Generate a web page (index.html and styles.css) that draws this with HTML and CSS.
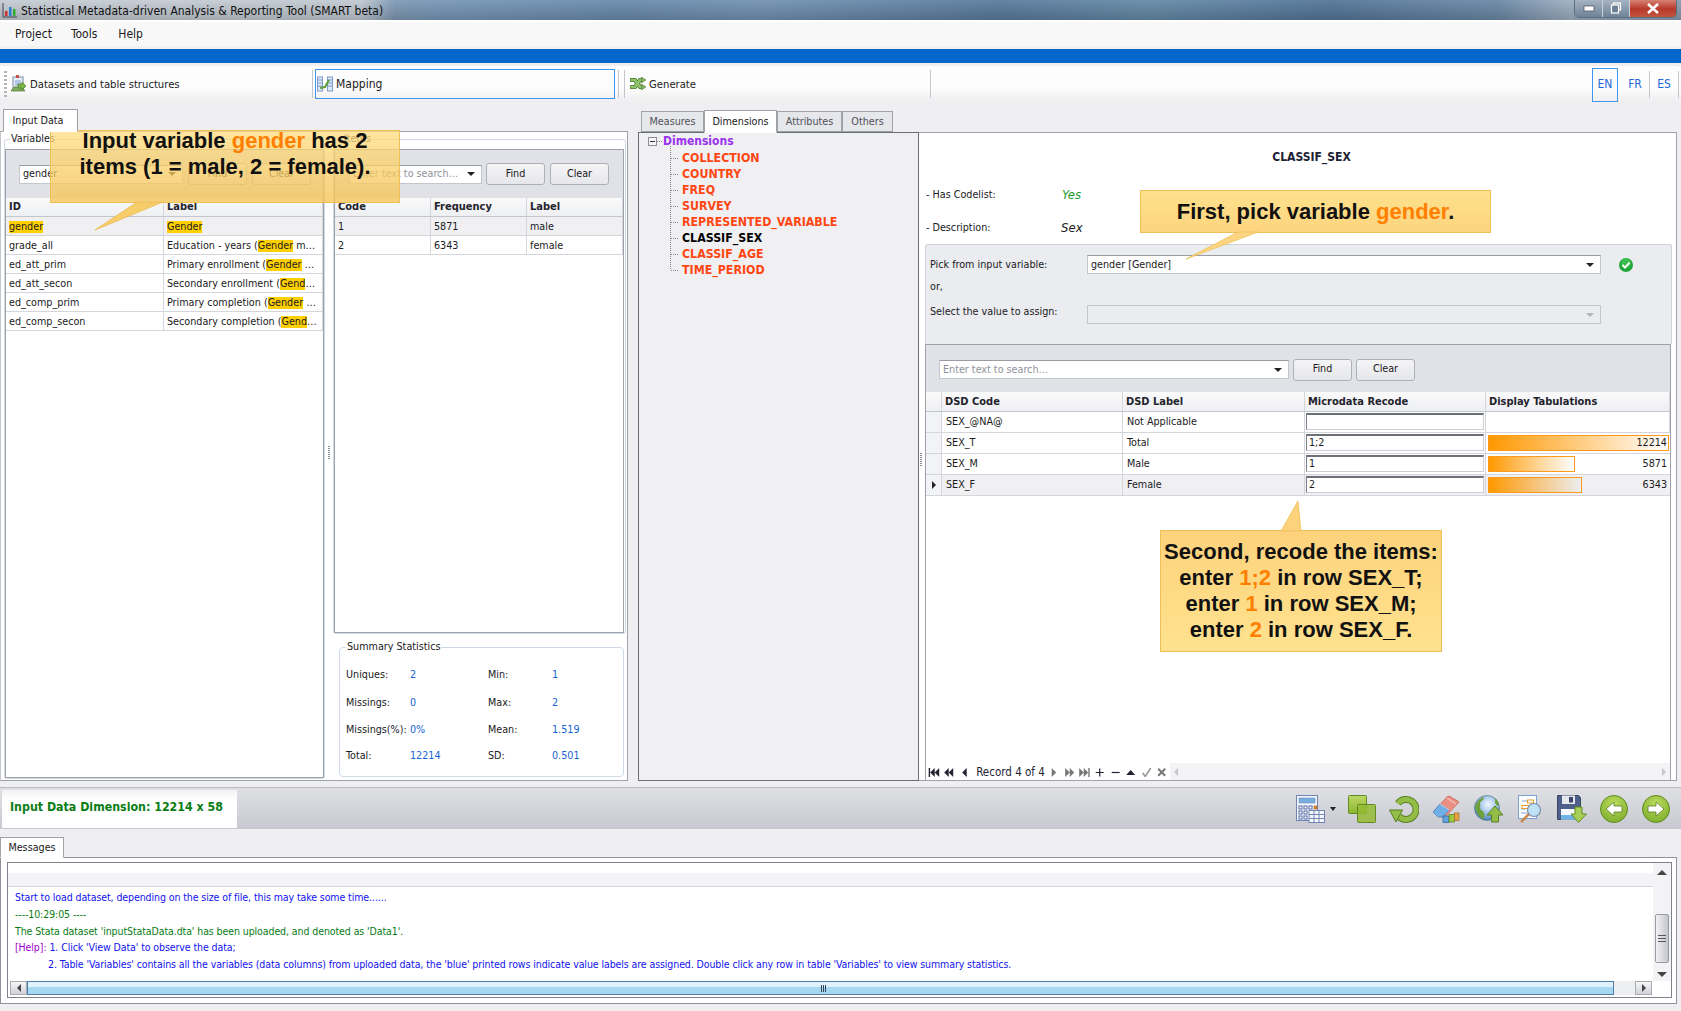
FILE: index.html
```html
<!DOCTYPE html>
<html lang="en">
<head>
<meta charset="utf-8">
<title>SMART beta</title>
<link rel="stylesheet" href="styles.css">
</head>
<body>
<div class="app">
  <header class="titlebar">
    <svg class="app-icon" width="16" height="16" viewBox="0 0 16 16"><path d="M1 1v14h14" fill="none" stroke="#445" stroke-width="1"/><rect x="3" y="9" width="2.5" height="5" fill="#c33"/><rect x="7" y="5" width="2.5" height="9" fill="#2a7fd0"/><rect x="11" y="7" width="2.5" height="7" fill="#3a3"/></svg>
    <span class="title-text">Statistical Metadata-driven Analysis &amp; Reporting Tool (SMART beta)</span>
    <div class="winbtns">
      <span class="winbtn win-min"><svg width="12" height="8" viewBox="0 0 12 8"><rect x="1" y="2" width="10" height="5" fill="#fff" stroke="#556" stroke-width=".8"/></svg></span>
      <span class="winbtn win-max"><svg width="12" height="12" viewBox="0 0 12 12"><rect x="3.5" y="1" width="7" height="7" fill="none" stroke="#fff" stroke-width="1.2"/><rect x="1.5" y="3" width="7" height="8" fill="#6b7f95" stroke="#fff" stroke-width="1.2"/></svg></span>
      <span class="winbtn win-close"><svg width="12" height="11" viewBox="0 0 12 11"><path d="M1 1l10 9M11 1L1 10" stroke="#fff" stroke-width="2.6"/></svg></span>
    </div>
  </header>
  <nav class="menubar"><span>Project</span><span>Tools</span><span>Help</span></nav>
  <div class="band"></div>
  <div class="toolbar">
    <span class="grip"></span>
    <div class="tool tool-data">
      <svg width="17" height="18" viewBox="0 0 17 18"><rect x="3" y="2" width="10" height="13" fill="#e8eef8" stroke="#7a8aa8"/><rect x="6" y="0" width="3" height="3" fill="#c9504a"/><path d="M5 6h6M5 8h6M5 10h6" stroke="#7fa0d0"/><path d="M1 16l3-4h8l3 4z" fill="#7fae5a" stroke="#4f7a35" stroke-width=".7"/><path d="M8 9h4V7l4 4-4 4v-2H8z" fill="#7cb342" stroke="#4f7a35" stroke-width=".7"/></svg>
      <span>Datasets and table structures</span>
    </div>
    <span class="sep"></span>
    <div class="tool tool-map">
      <svg width="16" height="16" viewBox="0 0 16 16"><rect x="0.5" y="1" width="5" height="14" fill="#dfe8f6" stroke="#7f9bc8"/><rect x="10.5" y="1" width="5" height="14" fill="#dfe8f6" stroke="#7f9bc8"/><path d="M1 4h4M1 7h4M1 10h4M11 4h4M11 7h4M11 10h4" stroke="#7f9bc8"/><path d="M3 12l5-1 4-7" fill="none" stroke="#5c9e3a" stroke-width="2"/></svg>
      <span>Mapping</span>
    </div>
    <span class="sep sep-a"></span><span class="sep sep-b"></span>
    <div class="tool tool-gen">
      <svg width="16" height="13" viewBox="0 0 16 13"><path d="M0 3h5l5 7h2" fill="none" stroke="#4f7a35" stroke-width="4"/><path d="M0 10h5l5-7h2" fill="none" stroke="#4f7a35" stroke-width="4"/><path d="M.5 3H5l5 7h2" fill="none" stroke="#8fc46a" stroke-width="2.6"/><path d="M.5 10H5l5-7h2" fill="none" stroke="#8fc46a" stroke-width="2.6"/><path d="M11.500 0l4.500 3-4.500 3zM11.500 7l4.500 3-4.500 3z" fill="#7cb35a" stroke="#4f7a35" stroke-width=".5"/></svg>
      <span>Generate</span>
    </div>
    <span class="sep"></span>
    <div class="langs"><span class="lang lang-on">EN</span><span class="lang">FR</span><span class="lang">ES</span></div>
  </div>

  <main class="main">
    <section class="left">
      <div class="tabs"><span class="tab tab-on tab-input">Input Data</span></div>
      <div class="left-panel">
        <div class="group group-vars">
          <span class="legend">Variables</span>
          <div class="grid-box grow">
            <div class="search search-vars">
              <span class="combo combo-vars"><span class="combo-text">gender</span><i class="caret"></i></span>
              <span class="btn">Find</span><span class="btn">Clear</span>
            </div>
            <div class="row head cols-vars"><span>ID</span><span>Label</span></div>
            <div class="row sel cols-vars"><span><mark>gender</mark></span><span><mark>Gender</mark></span></div>
            <div class="row cols-vars"><span>grade_all</span><span>Education - years (<mark>Gender</mark> m…</span></div>
            <div class="row cols-vars"><span>ed_att_prim</span><span>Primary enrollment (<mark>Gender</mark> …</span></div>
            <div class="row cols-vars"><span>ed_att_secon</span><span>Secondary enrollment (<mark>Gend</mark>…</span></div>
            <div class="row cols-vars"><span>ed_comp_prim</span><span>Primary completion (<mark>Gender</mark> …</span></div>
            <div class="row cols-vars"><span>ed_comp_secon</span><span>Secondary completion (<mark>Gend</mark>…</span></div>
          </div>
        </div>
        <div class="splitter"><i class="grip-v"></i></div>
        <div class="items-col">
          <div class="group group-items">
            <span class="legend legend-items">Items</span>
            <div class="grid-box grow">
              <div class="search search-items">
                <span class="combo combo-items"><span class="combo-text ph">Enter text to search…</span><i class="caret"></i></span>
                <span class="btn">Find</span><span class="btn">Clear</span>
              </div>
              <div class="row head cols-items"><span>Code</span><span>Frequency</span><span>Label</span></div>
              <div class="row sel cols-items"><span>1</span><span>5871</span><span>male</span></div>
              <div class="row cols-items"><span>2</span><span>6343</span><span>female</span></div>
            </div>
          </div>
          <div class="summary">
            <span class="legend legend-sum">Summary Statistics</span>
            <span>Uniques:</span><b>2</b><span>Min:</span><b>1</b>
            <span>Missings:</span><b>0</b><span>Max:</span><b>2</b>
            <span>Missings(%):</span><b>0%</b><span>Mean:</span><b>1.519</b>
            <span>Total:</span><b>12214</b><span>SD:</span><b>0.501</b>
          </div>
        </div>
      </div>
    </section>

    <section class="right">
      <div class="tabs tabs-right">
        <span class="tab t-m">Measures</span><span class="tab tab-on t-d">Dimensions</span><span class="tab t-a">Attributes</span><span class="tab t-o">Others</span>
      </div>
      <div class="right-body">
        <div class="tree">
          <div class="tree-root"><svg class="expander" width="9" height="9" viewBox="0 0 9 9"><rect x=".5" y=".5" width="8" height="8" fill="#f6f6f8" stroke="#8a8f9a"/><path d="M2 4.5h5" stroke="#333"/></svg><i class="dot-h"></i><span>Dimensions</span></div>
          <ul class="tree-list">
            <li>COLLECTION</li><li>COUNTRY</li><li>FREQ</li><li>SURVEY</li><li>REPRESENTED_VARIABLE</li><li class="tree-on">CLASSIF_SEX</li><li>CLASSIF_AGE</li><li>TIME_PERIOD</li>
          </ul>
        </div>
        <div class="detail">
          <i class="grip-v grip-detail"></i>
          <h2 class="detail-title">CLASSIF_SEX</h2>
          <div class="info"><span class="info-k">- Has Codelist:</span><em class="yes">Yes</em></div>
          <div class="info"><span class="info-k">- Description:</span><em class="sex">Sex</em></div>
          <div class="pick">
            <span class="pick-label">Pick from input variable:</span>
            <span class="combo combo-pick"><span class="combo-text">gender [Gender]</span><i class="caret"></i></span>
            <svg class="ok" width="14" height="14" viewBox="0 0 14 14"><circle cx="7" cy="7" r="7" fill="#22a83a"/><circle cx="7" cy="5" r="5" fill="#4cc95e" opacity=".6"/><path d="M3.5 7l2.5 2.6 4.5-5" fill="none" stroke="#fff" stroke-width="2"/></svg>
            <span class="or">or,</span>
            <span class="pick-sel">Select the value to assign:</span>
            <span class="combo combo-off"><i class="caret caret-off"></i></span>
          </div>
          <div class="recode">
            <div class="search search-recode">
              <span class="combo combo-recode"><span class="combo-text ph">Enter text to search…</span><i class="caret"></i></span>
              <span class="btn">Find</span><span class="btn">Clear</span>
            </div>
            <div class="row head cols-recode"><span class="rowsel"></span><span>DSD Code</span><span>DSD Label</span><span>Microdata Recode</span><span>Display Tabulations</span></div>
            <div class="row rrow cols-recode"><span class="rowsel"></span><span>SEX_@NA@</span><span>Not Applicable</span><span class="cell-in"><span class="input"></span></span><span></span></div>
            <div class="row rrow cols-recode"><span class="rowsel"></span><span>SEX_T</span><span>Total</span><span class="cell-in"><span class="input">1;2</span></span><span class="cell-bar"><i class="bar" style="width:181px"></i><span>12214</span></span></div>
            <div class="row rrow cols-recode"><span class="rowsel"></span><span>SEX_M</span><span>Male</span><span class="cell-in"><span class="input">1</span></span><span class="cell-bar"><i class="bar" style="width:87px"></i><span>5871</span></span></div>
            <div class="row rrow sel cols-recode"><span class="rowsel"><i class="row-mark"></i></span><span>SEX_F</span><span>Female</span><span class="cell-in"><span class="input">2</span></span><span class="cell-bar"><i class="bar bar-f" style="width:94px"></i><span>6343</span></span></div>
            <div class="recode-fill"></div>
            <div class="navbar">
              <svg class="nav-i" width="12" height="9" viewBox="0 0 12 9"><path d="M1 0h1.4v9H1zM7 0v9L2.5 4.5zM11.5 0v9L7 4.5z" fill="#223"/></svg>
              <svg class="nav-i" width="12" height="9" viewBox="0 0 12 9"><path d="M6 0v9L1.5 4.5zM10.5 0v9L6 4.5z" fill="#223"/></svg>
              <svg class="nav-i" width="12" height="9" viewBox="0 0 12 9"><path d="M8 0v9L3.5 4.5z" fill="#223"/></svg>
              <span class="record">Record 4 of 4</span>
              <svg class="nav-i" width="12" height="9" viewBox="0 0 12 9"><path d="M4 0v9l4.5-4.5z" fill="#777"/></svg>
              <svg class="nav-i" width="12" height="9" viewBox="0 0 12 9"><path d="M1.5 0v9L6 4.5zM6 0v9l4.5-4.5z" fill="#777"/></svg>
              <svg class="nav-i" width="12" height="9" viewBox="0 0 12 9"><path d="M.5 0v9L5 4.5zM5 0v9l4.5-4.5zM9.6 0H11v9H9.600z" fill="#777"/></svg>
              <svg class="nav-i" width="12" height="9" viewBox="0 0 12 9"><path d="M6 .5v8M2 4.500h8" stroke="#223" stroke-width="1.2"/></svg>
              <svg class="nav-i" width="12" height="9" viewBox="0 0 12 9"><path d="M2 4.500h8" stroke="#223" stroke-width="1.200"/></svg>
              <svg class="nav-i" width="12" height="9" viewBox="0 0 12 9"><path d="M6 2l4.500 5h-9z" fill="#223"/></svg>
              <svg class="nav-i" width="12" height="9" viewBox="0 0 12 9"><path d="M2 5l2.500 3.500L10 0" fill="none" stroke="#999" stroke-width="1.600"/></svg>
              <svg class="nav-i" width="12" height="9" viewBox="0 0 12 9"><path d="M2.500.8l7 7M9.500.8l-7 7" stroke="#777" stroke-width="2"/></svg>
              <div class="nav-track"><i class="arr-l"></i><i class="arr-r"></i></div>
            </div>
          </div>
        </div>
      </div>
    </section>
  </main>

  <div class="status">
    <div class="dim">Input Data Dimension: 12214 x 58</div>
    <div class="actions">
      <span class="act act-calc">
        <svg width="29" height="28" viewBox="0 0 29 28"><rect x=".5" y=".5" width="21" height="25" fill="#f2f5fb" stroke="#7084b8"/><rect x="3" y="3" width="16" height="5" fill="#78aedd" stroke="#5f86b8" stroke-width=".5"/><g fill="#fff" stroke="#566aa5"><rect x="3" y="11" width="3" height="3"/><rect x="8" y="11" width="3" height="3"/><rect x="13" y="11" width="3" height="3"/><rect x="3" y="16" width="3" height="3"/><rect x="8" y="16" width="3" height="3"/><rect x="3" y="21" width="3" height="3"/><rect x="8" y="21" width="3" height="3"/></g><rect x="18" y="11" width="3" height="3" fill="#e08a32" stroke="#a86020" stroke-width=".6"/><rect x="13" y="15.500" width="15.500" height="12" fill="#f6f8fc" stroke="#7084b8"/><path d="M13 19.500h15.500M13 23.500h15.500M18 15.500v12M23 15.500v12" stroke="#7084b8"/></svg>
        <i class="act-caret"></i>
      </span>
      <span class="act">
        <svg width="28" height="28" viewBox="0 0 28 28"><defs><linearGradient id="sq" x1="0" y1="0" x2="0" y2="1"><stop offset="0" stop-color="#bcd766"/><stop offset="1" stop-color="#8db52c"/></linearGradient></defs><rect x=".5" y=".5" width="18" height="18" rx="1" fill="url(#sq)" stroke="#618a22"/><rect x="9.500" y="9.500" width="18" height="18" rx="1" fill="#95bb34" fill-opacity=".85" stroke="#618a22"/></svg>
      </span>
      <span class="act">
        <svg width="30" height="28" viewBox="0 0 30 28"><path d="M10 21.500A10 10 0 1 0 9 8.500" fill="none" stroke="#557f22" stroke-width="7"/><path d="M10 21.500A10 10 0 1 0 9 8.500" fill="none" stroke="#93bd47" stroke-width="5"/><path d="M.5 15h13l-6.500 12z" fill="#93bd47" stroke="#557f22"/></svg>
      </span>
      <span class="act">
        <svg width="28" height="28" viewBox="0 0 28 28"><path d="M1 17L15 2a3 3 0 0 1 4 0l8 5-14 15H7z" fill="#e98f84" stroke="#c8574d" stroke-width=".7"/><path d="M1 17l7-8 9 6-6 7H6z" fill="#6faee6" stroke="#4d86c0" stroke-width=".7"/><path d="M8 9l9 6M15 3l9 6" stroke="#fff" stroke-opacity=".6"/><rect x="11" y="21" width="6" height="6.500" fill="#5fa6e0" stroke="#2c5e90" stroke-width=".7"/><rect x="17" y="19.500" width="5.500" height="7.500" fill="#9cc73e" stroke="#557f22" stroke-width=".7"/><rect x="22.500" y="18" width="4.500" height="7.500" fill="#e8a040" stroke="#a06a20" stroke-width=".7"/></svg>
      </span>
      <span class="act">
        <svg width="29" height="28" viewBox="0 0 29 28"><defs><radialGradient id="gl" cx=".55" cy=".35" r=".65"><stop offset="0" stop-color="#f2f8ff"/><stop offset=".5" stop-color="#a7c8ea"/><stop offset="1" stop-color="#4a7fb8"/></radialGradient></defs><circle cx="13" cy="13" r="12.500" fill="url(#gl)" stroke="#4a7a8e" stroke-width=".7"/><path d="M1 11c3-6 6-8 9-9 0 3-3 4-4 6 1 3-1 4 1 7 3 1 4 4 3 9-4-1-8-5-9-13zM21 3c3 2 4 5 4 8-2 0-3-1-4-3z" fill="#6fa03c"/><path d="M21 11l8 9h-4.500v7h-7v-7H13z" fill="#93bd47" stroke="#557f22"/></svg>
      </span>
      <span class="act">
        <svg width="24" height="28" viewBox="0 0 24 28"><rect x=".5" y=".5" width="18" height="23" fill="#fbfcff" stroke="#7fa0d0"/><path d="M4 6h5M3 14h4M3 18h6" stroke="#8aa6cc"/><rect x="9.500" y="5" width="6" height="3" fill="none" stroke="#e8a020"/><rect x="4" y="10.500" width="6.500" height="3" fill="none" stroke="#e8a020"/><path d="M11 19L3 27" stroke="#c88a50" stroke-width="2.500"/><circle cx="16" cy="15" r="6.500" fill="#bfe0f5" stroke="#7a8ea8" stroke-width="1.200"/></svg>
      </span>
      <span class="act">
        <svg width="30" height="28" viewBox="0 0 30 28"><path d="M.5.5h21l2 2v22H.5z" fill="#4e5f8a" stroke="#3a4668"/><rect x="5" y=".5" width="13" height="8.500" fill="#e6e8ee"/><rect x="12" y="2" width="4" height="5.500" fill="#3a4668"/><rect x="4" y="14" width="16" height="10.500" fill="#f6f7fb"/><rect x="4" y="20" width="16" height="4.500" fill="#6fb4e8"/><path d="M18 12h7v7h4.500L21.500 27.500 14 19h4z" fill="#a8cf55" stroke="#618a22"/></svg>
      </span>
      <span class="act">
        <svg width="28" height="28" viewBox="0 0 28 28"><defs><radialGradient id="rb" cx=".5" cy=".3" r=".8"><stop offset="0" stop-color="#bcdc5c"/><stop offset="1" stop-color="#78a82a"/></radialGradient></defs><circle cx="14" cy="14" r="13.500" fill="url(#rb)" stroke="#5f8a22"/><path d="M6 14l8-7v4h8v6h-8v4z" fill="#fff" stroke="#557f22" stroke-width=".8"/></svg>
      </span>
      <span class="act">
        <svg width="28" height="28" viewBox="0 0 28 28"><defs><radialGradient id="rn" cx=".5" cy=".3" r=".8"><stop offset="0" stop-color="#bcdc5c"/><stop offset="1" stop-color="#78a82a"/></radialGradient></defs><circle cx="14" cy="14" r="13.500" fill="url(#rn)" stroke="#5f8a22"/><path d="M22 14l-8-7v4H6v6h8v4z" fill="#fff" stroke="#557f22" stroke-width=".8"/></svg>
      </span>
    </div>
  </div>

  <section class="messages">
    <div class="tabs tabs-msg"><span class="tab tab-on tab-msg">Messages</span></div>
    <div class="msg-panel">
      <div class="msg-inner">
        <div class="msg-top">
          <div class="msg-main">
            <div class="msg-strip"></div>
            <div class="msg-text">
              <p class="m-blue">Start to load dataset, depending on the size of file, this may take some time......</p>
              <p class="m-green">----10:29:05 ----</p>
              <p class="m-green">The Stata dataset 'inputStataData.dta' has been uploaded, and denoted as 'Data1'.</p>
              <p class="m-blue"><span class="m-help">[Help]:</span> 1. Click 'View Data' to observe the data;</p>
              <p class="m-blue m-ind">2. Table 'Variables' contains all the variables (data columns) from uploaded data, the 'blue' printed rows indicate value labels are assigned. Double click any row in table 'Variables' to view summary statistics.</p>
            </div>
          </div>
          <div class="vscroll"><i class="v-up"></i><i class="v-thumb"></i><i class="v-down"></i></div>
        </div>
        <div class="hscroll"><i class="h-btn h-l"></i><i class="h-thumb"></i><i class="h-btn h-r"></i></div>
      </div>
    </div>
  </section>

  <div class="callout c-one">
    <p>Input variable <em>gender</em> has 2</p>
    <p>items (1 = male, 2 = female).</p>
    <svg class="tail t-one" width="120" height="29" viewBox="0 0 120 29"><polygon points="87,0 113,0 45,28" fill="#f7cd6b" stroke="#e9bd50" stroke-width=".8"/></svg>
  </div>
  <div class="callout c-two">
    <p>First, pick variable <em>gender</em>.</p>
    <svg class="tail t-two" width="120" height="28" viewBox="0 0 120 28"><polygon points="98,0 118,0 46,27" fill="#fbd582" stroke="#eec055" stroke-width=".8"/></svg>
  </div>
  <div class="callout c-three">
    <p>Second, recode the items:</p>
    <p>enter <em>1;2</em> in row SEX_T;</p>
    <p>enter <em>1</em> in row SEX_M;</p>
    <p>enter <em>2</em> in row SEX_F.</p>
    <svg class="tail t-three" width="145" height="31" viewBox="0 0 145 31"><polygon points="121,31 141,31 138,1" fill="#fdd27c" stroke="#eec055" stroke-width=".8"/></svg>
  </div>
</div>
</body>
</html>
```

FILE: styles.css
```css
* { box-sizing: border-box; }
html, body { margin: 0; padding: 0; }
body { background: #efeff1; font: 10.7px/1.2 "DejaVu Sans Condensed", "Liberation Sans", sans-serif; color: #1a1a22; overflow: hidden; }
.app { position: relative; width: 1681px; height: 1011px; display: flex; flex-direction: column; }
p { margin: 0; }

.titlebar { height: 22px; display: flex; align-items: center; padding-left: 2px; border-bottom: 2px solid; border-image: linear-gradient(#30404f 50%, #fff 50%) 1;
  background: linear-gradient(180deg, rgba(255,255,255,.06), rgba(0,0,0,.16)), linear-gradient(90deg, #c6cdd4 0, #c2cad2 360px, #7f9ab6 395px, #7898b8 440px, #6a8cae 620px, #7393b3 760px, #5a7c9e 1000px, #668ba8 1150px, #54769a 1330px, #6d8aa8 1500px, #9fb0c2 1570px, #8a9db0 1681px); }
.app-icon { flex: none; }
.title-text { margin-left: 3px; padding-top: 2px; font-size: 12px; color: #111; }
.winbtns { margin-left: auto; margin-right: 4px; display: flex; height: 19px; margin-top: -1px; border: 1px solid #5c6f82; border-top: 0; border-radius: 0 0 5px 5px; overflow: hidden; align-self: flex-start; }
.winbtn { display: flex; align-items: center; justify-content: center; height: 100%; }
.win-min { width: 28px; background: linear-gradient(#a9b6c4, #6f8398); border-right: 1px solid #c8d0d8; }
.win-max { width: 27px; background: linear-gradient(#a9b6c4, #6f8398); border-right: 1px solid #c8d0d8; }
.win-close { width: 46px; background: linear-gradient(#d98a7c, #b8382a 55%, #c2553f); }

.menubar { height: 24px; background: #f8f8f8; display: flex; align-items: center; padding-left: 15px; gap: 19px; font-size: 12px; }
.menubar span:nth-child(3) { margin-left: 2px; }
.band { height: 17px; border-top: 3px solid #f1f1f1; background: #0366cb; border-bottom: 0; }

.toolbar { margin-top: 3px; height: 35px; display: flex; align-items: center; background: linear-gradient(#fdfdfd 60%, #efeff1); flex: none; }
.grip { width: 3px; height: 26px; margin-left: 4px; background: repeating-linear-gradient(#b4b6bc 0 2px, transparent 2px 4px); }
.tool { display: flex; align-items: center; gap: 3px; font-size: 11.2px; }
.tool > span { padding-top: 1px; }
.tool-data > span, .tool-gen > span { padding-top: 3px; }
.tool-data { width: 305px; padding-left: 3px; }
.sep { width: 1px; height: 28px; background: #c4c6cc; flex: none; }
.tool-map { width: 300px; height: 30px; margin-left: 2px; border: 1px solid #3f97ef; padding-left: 1px; font-size: 12px; }
.sep-a { margin-left: 3px; }
.sep-b { margin-left: 5px; }
.tool-gen { width: 305px; padding-left: 5px; }
.langs { margin-left: auto; display: flex; height: 34px; margin-right: 2px; }
.lang { width: 29px; display: flex; align-items: center; justify-content: center; color: #2468d8; font-size: 12px; border-right: 1px solid #c4c6cc; margin: 4px 0 0; height: 27px; }
.lang-on { width: 26px; height: 34px; margin: 1px 3px 0 0; border: 1px solid #3f97ef; }

.main { flex: none; height: 680px; margin-bottom: 6px; display: flex; padding-top: 8px; }
.left { width: 628px; flex: none; display: flex; flex-direction: column; }
.right { width: 1039px; margin-left: 10px; flex: none; display: flex; flex-direction: column; }

.tabs { display: flex; align-items: flex-end; flex: none; height: 22px; position: relative; z-index: 1; }
.tab { display: flex; align-items: center; justify-content: center; height: 21px; padding-top: 2px; background: #e6e7eb; border: 1px solid #a0a2aa; color: #50525a; margin-bottom: 0; }
.tab-on { background: #fff; color: #1a1a22; height: 23px; border-bottom-color: #fff; margin-bottom: -1px; }
.tab-input { width: 75px; margin-left: 3px; padding: 2px 5px 0 0; }

.left-panel { flex: 1; min-height: 0; display: flex; border: 1px solid #a0a2aa; border-left: 1px solid #c4c6cc; background: #fff; padding: 7px 1px 1px 3px; }
.group { position: relative; border: 1px solid #d0dae6; border-radius: 3px; padding: 9px 0 0; display: flex; flex-direction: column; }
.legend { position: absolute; top: -7px; left: 5px; background: #fff; padding: 0 1px; }
.group-vars { width: 321px; flex: none; }
.grid-box { border: 1px solid #a0a2aa; background: #fff; display: flex; flex-direction: column; }
.grow { flex: 1; min-height: 0; }
.splitter { width: 8px; flex: none; display: flex; align-items: center; justify-content: center; padding-bottom: 14px; }
.grip-v { display: block; width: 2px; height: 13px; background: repeating-linear-gradient(#8a8c94 0 1px, transparent 1px 2px); }
.items-col { width: 293px; flex: none; display: flex; flex-direction: column; }
.group-items { height: 495px; flex: none; padding: 9px 1px 0 0; }
.legend-items { left: 9px; }

.search { height: 48px; flex: none; background: #e0e2e8; display: flex; align-items: center; }
.combo { display: flex; align-items: center; justify-content: space-between; height: 19px; background: #fff; border: 1px solid #c4c6ce; border-top-color: #9a9ca4; }
.combo-text { padding: 1px 0 0 3px; }
.ph { color: #90929a; }
.caret { display: block; width: 0; height: 0; margin-right: 6px; border: 4px solid transparent; border-top: 4px solid #222; border-bottom: 0; }
.caret-off { border-top-color: #b4b6bc; }
.btn { width: 59px; height: 22px; margin-left: 5px; display: flex; align-items: center; justify-content: center; border: 1px solid #aeb0b8; border-radius: 3px; background: linear-gradient(#f4f4f6, #e6e7ea); }
.combo-vars { width: 164px; margin-left: 13px; }
.combo-items { width: 133px; margin-left: 14px; }
.search-items .combo + .btn { margin-left: 4px; }

.row { display: grid; align-items: center; height: 19px; flex: none; border-bottom: 1px solid #d4d6dc; }
.row > span { padding-left: 3px; overflow: hidden; white-space: pre; border-right: 1px solid #d4d6dc; height: 100%; display: flex; align-items: center; }
.row > span > * { flex: none; }
.cols-vars:not(.head) > span, .cols-items:not(.head) > span { padding-top: 2px; }
.row.sel { background: #f0f0f3; }
.head { font-weight: 700; font-size: 11px; background: linear-gradient(#fafafb, #eeeff2); border-bottom-color: #c4c6ce; color: #23232c; }
.cols-vars { grid-template-columns: 158px 1fr; }
.cols-items { grid-template-columns: 96px 96px 1fr; }
mark { background: #ffd000; color: inherit; }

.summary { position: relative; margin: 13px 2px 2px 6px; flex: 1; min-height: 0; border: 1px solid #d0dae6; border-radius: 4px; padding: 13px 0 0 6px; display: grid; grid-template-columns: 64px 78px 64px 1fr; grid-template-rows: 28px 28px 27px 25px; align-items: center; }
.summary b { font-weight: 400; color: #1563d6; }
.legend-sum { left: 6px; }

.tabs-right { height: 23px; padding-left: 3px; }
.t-m { width: 63px; } .t-d { width: 73px; } .t-a { width: 65px; } .t-o { width: 51px; }
.right-body { flex: 1; min-height: 0; display: flex; }
.tree { width: 281px; flex: none; background: #f0f0f2; border: 1px solid #6c6e76; padding: 0 0 0 9px; font-size: 12.3px; font-weight: 700; }
.tree-root { display: flex; align-items: center; height: 17px; color: #9933ee; font-size: 12px; }
.expander { flex: none; }
.dot-h { width: 6px; height: 1px; background: repeating-linear-gradient(90deg, #888 0 1px, transparent 1px 2px); flex: none; }
.tree-list { list-style: none; margin: -4px 0 0 22px; padding: 4px 0 0; background: repeating-linear-gradient(#888 0 1px, transparent 1px 2px) left top / 1px 124px no-repeat; }
.tree-list li { height: 16px; line-height: 16px; padding-left: 12px; color: #ff4612; background: repeating-linear-gradient(90deg, #888 0 1px, transparent 1px 2px) 1px 8px / 8px 1px no-repeat; }
.tree-list li.tree-on { color: #000; }

.detail { position: relative; flex: 1; min-width: 0; background: #fff; border: 1px solid #a0a2aa; border-left: 0; display: flex; flex-direction: column; padding: 0 4px 0 6px; }
.grip-detail { position: absolute; left: 1px; top: 320px; }
.detail-title { margin: 0; height: 45px; padding: 16px 0 0 26px; text-align: center; font-size: 12px; line-height: 16px; font-weight: 700; color: #1c2234; flex: none; }
.info { height: 33px; flex: none; display: flex; align-items: center; }
.info-k { width: 136px; padding: 2px 0 0 1px; }
.info em { font-size: 13px; color: #222; width: 20px; text-align: right; }
.info em.yes { color: #1c9a2c; }
.pick { height: 100px; flex: none; background: #ebecf0; border: 1px solid #cfd1d8; border-bottom: 0; border-radius: 3px 3px 0 0; display: grid; grid-template-columns: 157px 514px 19px 14px; grid-template-rows: 19px 31px 19px; padding: 10px 0 0 4px; align-items: center; }
.pick-label { padding-top: 2px; }
.pick .ok { margin-left: 18px; grid-column: 3 / 5; }
.or { grid-column: 1 / -1; margin-top: -4px; }
.pick-sel { margin-bottom: 4px; }
.combo-off { background: #ebecf0; border-color: #c4c6ce; justify-content: flex-end; }
.combo-pick { grid-column: 2; }

.recode { flex: 1; min-height: 0; display: flex; flex-direction: column; border: 1px solid #a0a2aa; border-bottom: 0; margin-right: 1px; }
.search-recode { flex: none; height: 47px; padding-top: 2px; }
.search-recode .combo + .btn { margin-left: 4px; }
.search-recode .btn + .btn { margin-left: 4px; }
.combo-recode { width: 350px; margin-left: 13px; }
.cols-recode { grid-template-columns: 16px 181px 182px 181px 1fr; }
.cols-recode.head { height: 20px; }
.rrow { height: 21px; }
.rrow > span { padding: 1px 0 0 4px; }
.head > span { padding-left: 3px; }
.rowsel { background: #f2f3f6; padding: 0 !important; justify-content: center; }
.head .rowsel { background: transparent; }
.row-mark { width: 0; height: 0; border: 4px solid transparent; border-left: 4px solid #222; border-right: 0; }
.rrow .cell-in { padding: 1px 1px 2px 1px; }
.input { flex: 1 !important; height: 17px; background: #fff; border: 1px solid #ccced4; border-top: 2px solid #6e7078; border-left-color: #7c7e86; padding-left: 2px; line-height: 14px; }
.rrow .cell-bar { position: relative; padding: 0 3px 0 2px; justify-content: flex-end; border-right: 0; }
.bar { position: absolute; left: 2px; top: 2px; bottom: 2px; border: 1px solid #ff9a1f; background: linear-gradient(90deg, #ff9800, #fff); }
.bar-f { background: linear-gradient(90deg, #ff9800, #eceef1); }
.cell-bar span { position: relative; }
.recode-fill { flex: 1; }
.navbar { height: 17px; flex: none; display: flex; align-items: center; }
.nav-i { width: 15.4px; flex: none; margin-top: 2px; }
.record { width: 74px; font-size: 11.5px; color: #1c2234; padding: 2px 0 0 4px; white-space: nowrap; }
.nav-track { margin-left: 1px; flex: 1; align-self: stretch; background: #f3f3f6; display: flex; justify-content: space-between; align-items: center; padding: 0 4px; }
.arr-l { border: 4px solid transparent; border-right: 4px solid #c4c6cc; border-left: 0; }
.arr-r { border: 4px solid transparent; border-left: 4px solid #c4c6cc; border-right: 0; }

.status { height: 42px; flex: none; display: flex; align-items: center; background: linear-gradient(#dfe0e4, #c8c9d0); border-top: 1px solid #bbbcc2; }
.dim { width: 235px; height: 38px; margin-left: 2px; background: linear-gradient(#f2f2f4, #fff 25%); display: flex; align-items: center; padding: 0 0 2px 8px; color: #0a7c14; font-size: 12.3px; font-weight: 700; white-space: nowrap; }
.actions { margin-left: auto; display: flex; align-items: center; padding-right: 4px; }
.act { width: 42px; height: 28px; display: flex; justify-content: center; }
.act-calc { width: 45px; justify-content: flex-start; align-items: center; gap: 5px; }
.act-caret { border: 3px solid transparent; border-top: 4px solid #222; border-bottom: 0; }

.messages { flex: 1; min-height: 0; padding-top: 8px; display: flex; flex-direction: column; }
.tabs-msg { height: 20px; }
.tab-msg { width: 64px; height: 21px; border-left: 1px solid #a0a2aa; }
.msg-panel { height: 147px; width: 1677px; flex: none; border: 1px solid #90929a; padding: 4px 4px 5px 6px; background: #fff; }
.msg-inner { height: 100%; border: 1px solid #80828a; display: flex; flex-direction: column; }
.msg-top { flex: 1; min-height: 0; display: flex; }
.msg-main { flex: 1; min-width: 0; display: flex; flex-direction: column; }
.msg-strip { margin-top: 10px; height: 14px; background: #f4f4f6; border-bottom: 1px solid #d4d6dc; flex: none; }
.msg-text { padding: 2px 0 0 7px; font-size: 10.5px; letter-spacing: -.09px; line-height: 16.8px; overflow: hidden; }
.msg-text p { white-space: nowrap; }
.m-blue { color: #1212f0; }
.m-green { color: #0a7c14; }
.m-help { color: #a000c8; }
.m-ind { padding-left: 33px; }
.vscroll { width: 18px; flex: none; background: #f3f3f5; position: relative; display: flex; flex-direction: column; align-items: center; }
.v-up { border: 5px solid transparent; border-bottom: 5px solid #444; border-top: 0; margin-top: 7px; }
.v-thumb { width: 14px; height: 49px; margin-top: 39px; border: 1px solid #9a9ca4; border-radius: 2px; background: linear-gradient(#555 0 0) center 20px / 8px 1px no-repeat, linear-gradient(#555 0 0) center 23px / 8px 1px no-repeat, linear-gradient(#555 0 0) center 26px / 8px 1px no-repeat, linear-gradient(90deg, #f2f2f4, #c4c6cc); }
.v-down { border: 5px solid transparent; border-top: 5px solid #444; border-bottom: 0; margin-top: 9px; }
.hscroll { height: 14px; flex: none; margin: 0 19px 2px 2px; display: flex; background: #eeeff1; }
.h-btn { width: 17px; flex: none; border: 1px solid #a8aab2; background: linear-gradient(#f6f6f8, #d0d2d8); display: flex; align-items: center; justify-content: center; }
.h-btn::before { content: ""; border: 4px solid transparent; }
.h-l::before { border-right: 4px solid #444; border-left: 0; }
.h-r::before { border-left: 4px solid #444; border-right: 0; }
.h-thumb { width: 1587px; flex: none; border: 1px solid #4e80a8; background: linear-gradient(#345 0 0) 793px 3px / 1px 7px no-repeat, linear-gradient(#345 0 0) 795px 3px / 1px 7px no-repeat, linear-gradient(#345 0 0) 797px 3px / 1px 7px no-repeat, linear-gradient(#dff1fc 0 45%, #a6d8f2 45%); }
.h-r { margin-left: auto; }

.callout { position: absolute; border: 1px solid #eec055; text-align: center; font: 700 22px/26px "Liberation Sans", Arial, sans-serif; color: #111; }
.callout em { font-style: normal; color: #ff7f00; }
.tail { position: absolute; display: block; overflow: visible; }
.c-one { left: 50px; top: 130px; width: 350px; height: 73px; background: linear-gradient(rgba(255,220,125,.74), rgba(245,195,85,.78)); }
.c-one p:first-child { margin-top: -3px; }
.t-one { left: -1px; top: 100%; }
.c-two { left: 1140px; top: 190px; width: 351px; height: 43px; line-height: 41px; background: linear-gradient(#ffe18d, #fdd47f); }
.t-two { left: -1px; top: 100%; }
.c-three { left: 1160px; top: 530px; width: 282px; height: 122px; padding-top: 8px; background: linear-gradient(#fdd27c, #ffe28f); }
.t-three { left: -1px; bottom: 100%; }
```
